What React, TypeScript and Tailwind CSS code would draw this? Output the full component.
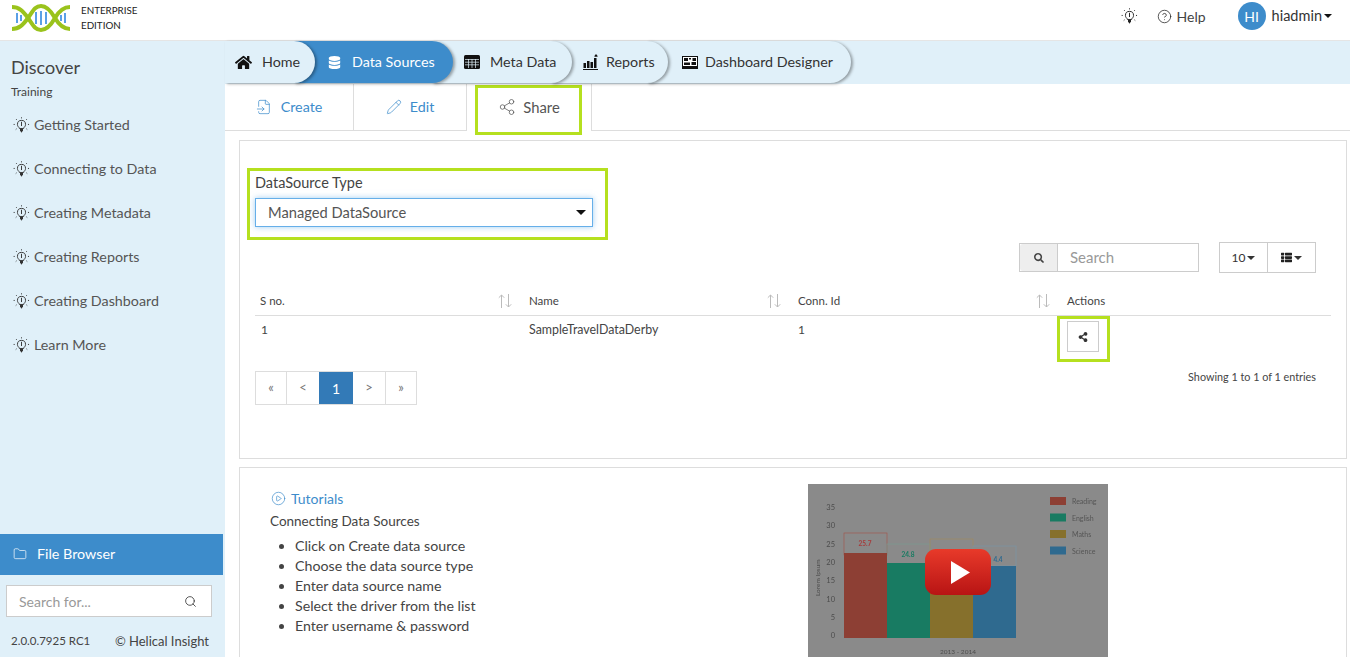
import { Fragment } from 'react';
import { FaHome, FaDatabase, FaShareAlt, FaSearch, FaThList } from 'react-icons/fa';
import { Search, Pencil, Share2, Folder, CirclePlay, CircleHelp, FileInput } from 'lucide-react';

const FONT = "font-['Lato','Noto_Sans',sans-serif]";

const TRAINING = ['Getting Started', 'Connecting to Data', 'Creating Metadata', 'Creating Reports', 'Creating Dashboard', 'Learn More'];
const STEPS = ['Click on Create data source', 'Choose the data source type', 'Enter data source name', 'Select the driver from the list', 'Enter username & password'];

function Bulb({ className }: { className?: string }) {
  return (
    <svg viewBox="0 0 16 16" className={className} fill="none" stroke="currentColor" strokeWidth="0.9">
      <path d="M5.4 9.6C4.5 8.8 4.2 7.900 4.2 7a3.800 3.800 0 0 1 7.600 0c0 .9-.3 1.800-1.200 2.600-.4.4-.6.8-.6 1.200H6c0-.4-.2-.8-.6-1.200Z" />
      <path d="M8 4.500v4M6.800 12h2.400" />
      <path d="M6.600 11.400h2.800v1.400L8 14.800l-1.400-2Z" fill="currentColor" stroke="none" />
      <path d="M8 .3v1.200M2.800 1.900l.9.900M13.200 1.900l-.9.900M.6 7h1.300M14.100 7h1.300M2.600 11.800l.9-.8M13.400 11.800l-.9-.8" strokeDasharray="1 .5" />
    </svg>
  );
}

function Logo() {
  return (
    <svg viewBox="0 0 60 28" className="h-7 w-[60px]">
      <g stroke="#5aa0e6" strokeWidth="2">
        <path d="M6 9v10M10 11v6M25 8v12M30 7v14M35 8v12M50 11v6M54 9v10" />
      </g>
      <g fill="none" stroke="#9ac31c" strokeWidth="4">
        <path d="M1 3C8 3 12 7 17 14S24 26 30 26 40 21 44 14 52 3 59 3" />
        <path d="M1 25C8 25 12 21 17 14S24 2 30 2 40 7 44 14 52 25 59 25" />
      </g>
    </svg>
  );
}

function TableIcon() {
  return (
    <svg viewBox="0 0 16 14" className="h-[14px] w-4">
      <rect x="0" y="0" width="16" height="14" rx="1.500" fill="#111" />
      <path d="M1 4.500h14M1 7.200h14M1 9.800h14M4.500 4v9M8 4v9M11.500 4v9" stroke="#e0f0f9" strokeWidth="0.700" />
    </svg>
  );
}

function ReportsIcon() {
  return (
    <svg viewBox="0 0 16 16" className="h-4 w-4" fill="#111">
      <rect x="0.500" y="9" width="2.500" height="5" />
      <rect x="4" y="7" width="2.500" height="7" />
      <rect x="7.500" y="8" width="2.500" height="6" />
      <rect x="11" y="4" width="2.500" height="10" />
      <path d="M0 15h15v1H0ZM13 0l2 2.500h-1.500V3h-1v-.5H11Z" />
    </svg>
  );
}

function DashIcon() {
  return (
    <svg viewBox="0 0 16 13" className="h-[13px] w-4">
      <rect x="0.500" y="0.500" width="15" height="10" fill="#fff" stroke="#111" />
      <path d="M2 2h4v3H2ZM7 2h2v1.500H7ZM10.500 2H14v3h-3.500ZM2 6.500h6V9H2ZM9.500 6h4.500v3H9.500Z" fill="#111" />
      <rect x="0" y="11" width="16" height="2" fill="#111" />
    </svg>
  );
}

function SortIcon() {
  return (
    <svg viewBox="0 0 16 16" className="h-4 w-4 text-[#bbb]" fill="none" stroke="currentColor" strokeWidth="1">
      <path d="M4.500 15V2M1.800 4.700 4.500 2l2.700 2.700M11.500 1v13M8.800 11.300l2.700 2.700 2.700-2.700" />
    </svg>
  );
}

function Caret({ className = '' }: { className?: string }) {
  return <span className={`inline-block h-0 w-0 border-x-[4px] border-t-[4px] border-x-transparent border-t-current ${className}`} />;
}

function Pill({ label, icon, width, active, z }: { label: string; icon: React.ReactNode; width: string; active?: boolean; z: string }) {
  return (
    <div
      className={`${width} ${z} relative flex h-[42px] shrink-0 items-center rounded-r-[21px] shadow-[2px_1px_3px_rgba(0,0,0,0.35)] ${
        active ? 'bg-[#3d8ccb] text-white' : 'bg-[#e0f0f9] text-[#333]'
      }`}
    >
      {icon}
      <span className="text-[14.300px]">{label}</span>
    </div>
  );
}

function VideoThumb() {
  const ticks = [35, 30, 25, 20, 15, 10, 5, 0];
  const legend = [['Reading', '#8d3f34'], ['English', '#187b62'], ['Maths', '#86702c'], ['Science', '#2f6a8f']];
  return (
    <div className="relative ml-[100px] h-[173px] w-[300px] shrink-0 overflow-hidden bg-[#8a8a8a]">
      <svg viewBox="0 0 300 173" className="h-full w-full blur-[0.6px]">
        {ticks.map((t, i) => (
          <text key={t} x="27" y={26 + i * 18.300} textAnchor="end" fontSize="7.500" fill="#4c4c4c">{t}</text>
        ))}
        <text x="0" y="0" fontSize="6.500" fill="#4c4c4c" transform="translate(12 112) rotate(-90)">Lorem Ipsum</text>
        <rect x="36" y="49" width="43" height="22" fill="none" stroke="#a05a50" strokeWidth="0.700" />
        <rect x="79" y="60" width="43" height="20" fill="none" stroke="#7a9a90" strokeWidth="0.700" />
        <rect x="122" y="55" width="43" height="20" fill="none" stroke="#a08a60" strokeWidth="0.700" />
        <rect x="165" y="62" width="43" height="20" fill="none" stroke="#7a95a5" strokeWidth="0.700" />
        <rect x="36" y="69" width="43" height="85" fill="#8d3f34" />
        <rect x="79" y="79" width="43" height="75" fill="#187b62" />
        <rect x="122" y="75" width="43" height="79" fill="#86702c" />
        <rect x="165" y="82" width="43" height="72" fill="#2f6a8f" />
        <text x="57" y="62" textAnchor="middle" fontSize="6.500" fontWeight="bold" fill="#a63c3c">25.7</text>
        <text x="100" y="73" textAnchor="middle" fontSize="6.500" fontWeight="bold" fill="#187b62">24.8</text>
        <text x="190" y="78" textAnchor="middle" fontSize="6.500" fontWeight="bold" fill="#2f6a8f">4.4</text>
        <text x="150" y="170" textAnchor="middle" fontSize="6.500" fill="#4c4c4c">2013 - 2014</text>
        {legend.map(([name, c], i) => (
          <Fragment key={name}>
            <rect x="242" y={13 + i * 16.500} width="16" height="8" fill={c} />
            <text x="264" y={20 + i * 16.500} fontSize="7" fill="#555">{name}</text>
          </Fragment>
        ))}
        <defs>
          <linearGradient id="yt" x1="0" y1="0" x2="0" y2="1">
            <stop offset="0" stopColor="#e83a2a" />
            <stop offset="1" stopColor="#b81414" />
          </linearGradient>
        </defs>
        <rect x="117" y="65" width="66" height="46" rx="11" fill="url(#yt)" />
        <path d="M143 77v23l19-11.500Z" fill="#fff" />
      </svg>
    </div>
  );
}

export default function App() {
  return (
    <div className={`${FONT} flex h-[657px] w-[1350px] flex-col overflow-hidden bg-white text-[#333]`}>
      {/* top bar */}
      <header className="flex h-[41px] shrink-0 items-start border-b border-[#e5e5e5] bg-white">
        <div className="ml-[11px] mt-[4px]"><Logo /></div>
        <div className="ml-[10px] mt-[3px] text-[9.800px] leading-[15px] text-[#222]">
          <div>ENTERPRISE</div>
          <div>EDITION</div>
        </div>
        <div className="ml-auto mt-[2px] flex items-center">
          <Bulb className="h-[17px] w-[17px] text-[#222]" />
          <CircleHelp className="ml-[19px] h-[15px] w-[15px] text-[#222]" strokeWidth={1.2} />
          <span className="ml-[5px] text-[14px] text-[#444]">Help</span>
          <div className="ml-[32px] flex h-7 w-7 items-center justify-center rounded-full bg-[#3d8ccb] text-[14px] text-white">HI</div>
          <span className="ml-[6px] text-[14.500px] text-[#333]">hiadmin</span>
          <Caret className="ml-[2px] mr-[18px] text-[#111]" />
        </div>
      </header>

      <div className="flex min-h-0 flex-1">
        {/* sidebar */}
        <aside className="flex w-[225px] shrink-0 flex-col bg-[#e0f0f9]">
          <div className="ml-[11px] mt-[14px] text-[18px] leading-[24px] text-[#444]">Discover</div>
          <div className="ml-[11px] mt-[5px] text-[12px] leading-[16px] text-[#444]">Training</div>
          <ul className="mt-[3px]">
            {TRAINING.map(t => (
              <li key={t} className="flex h-[44px] items-center pl-[13px] text-[14.300px] text-[#555]">
                <Bulb className="mr-[4px] h-[17px] w-[17px] text-[#333]" />
                {t}
              </li>
            ))}
          </ul>
          <div className="mr-[2px] mt-auto flex h-[41px] items-center bg-[#3d8ccb] pb-[2px] pl-[13px] text-[14.300px] text-white">
            <Folder className="mr-[10px] h-[14px] w-[14px]" strokeWidth={1.2} />
            File Browser
          </div>
          <div className="ml-[6px] mt-[10px] flex h-8 w-[206px] items-center justify-between border border-[#ccc] bg-white pl-3 pr-[14px] text-[14px] text-[#999]">
            Search for...
            <Search className="h-[13px] w-[13px] text-[#333]" strokeWidth={1.5} />
          </div>
          <div className="mb-[8px] ml-[11px] mr-[16px] mt-[16px] flex items-center justify-between leading-4 text-[#444]">
            <span className="text-[11.500px]">2.0.0.7925 RC1</span>
            <span className="text-[13px]">© Helical Insight</span>
          </div>
        </aside>

        {/* main */}
        <main className="flex min-w-0 flex-1 flex-col">
          <nav className="flex h-[43px] shrink-0 bg-[#e0f0f9]">
            <Pill z="z-50" width="w-[90px]" label="Home" icon={<FaHome className="ml-[10px] mr-[10px] h-[17px] w-[17px] text-[#111]" />} />
            <Pill z="z-40" width="w-[159px] -ml-[21px] pl-[21px]" active label="Data Sources" icon={<FaDatabase className="ml-[13px] mr-[11px] h-[13px] w-[13px]" />} />
            <Pill z="z-30" width="w-[140px] -ml-[21px] pl-[21px]" label="Meta Data" icon={<span className="ml-[11px] mr-[10px]"><TableIcon /></span>} />
            <Pill z="z-20" width="w-[117px] -ml-[21px] pl-[21px]" label="Reports" icon={<span className="ml-[11px] mr-[7px]"><ReportsIcon /></span>} />
            <Pill z="z-10" width="w-[204px] -ml-[21px] pl-[21px]" label="Dashboard Designer" icon={<span className="ml-[14px] mr-[7px]"><DashIcon /></span>} />
          </nav>

          {/* tabs */}
          <div className="flex h-[47px] shrink-0 border-b border-[#ddd]">
            <div className="flex w-[129px] items-center justify-center gap-[9px] border-r border-[#ddd] text-[14.300px] text-[#3d8ccb]">
              <FileInput className="h-4 w-4" strokeWidth={1.1} />
              Create
            </div>
            <div className="flex w-[112px] items-center justify-center gap-[8px] text-[14.300px] text-[#3d8ccb]">
              <Pencil className="h-4 w-4" strokeWidth={1.1} />
              Edit
            </div>
            <div className="relative -mb-px flex w-[126px] items-center justify-center gap-[7px] border-x border-[#ddd] bg-white pb-px text-[14.800px] text-[#555]">
              <Share2 className="h-[18px] w-[18px]" strokeWidth={1} />
              Share
              <div className="absolute bottom-[-4px] left-[8px] right-[9px] top-[1px] border-[3px] border-[#b5e01f]" />
            </div>
          </div>

          <div className="flex min-h-0 flex-1 flex-col gap-[8px] pl-[14px] pr-[3px] pt-[9px]">
            {/* share panel */}
            <section className="relative h-[319px] shrink-0 border border-[#ddd] px-[15px]">
              <div className="relative mt-[33px] text-[14.500px] text-[#444]">
                <label className="block h-[18px] leading-[18px]">DataSource Type</label>
                <div className="mt-[6px] flex h-[29px] w-[338px] items-center justify-between border border-[#66afe9] bg-white pl-3 pr-[6px] text-[14.700px] text-[#555] shadow-[0_0_6px_rgba(102,175,233,0.6)]">
                  Managed DataSource
                  <Caret className="border-x-[5px] border-t-[5px] text-[#111]" />
                </div>
                <div className="absolute -left-[8px] -top-[6px] h-[72px] w-[361px] border-[3px] border-[#b5e01f]" />
              </div>

              <div className="mr-[15px] mt-[16px] flex justify-end">
                <div className="flex h-[29px] w-[180px] border border-[#ccc]">
                  <span className="flex w-[38px] items-center justify-center rounded-l-[3px] border-r border-[#ccc] bg-[#eee]">
                    <FaSearch className="h-[10px] w-[10px] text-[#444]" />
                  </span>
                  <span className="flex items-center pl-3 text-[15px] text-[#999]">Search</span>
                </div>
                <div className="ml-[20px] flex h-[31px] w-[97px] -translate-y-px border border-[#ccc] text-[#333]">
                  <span className="flex w-[48px] items-center justify-center gap-[2px] border-r border-[#ccc] text-[12px]">10<Caret /></span>
                  <span className="flex flex-1 items-center justify-center gap-[2px]"><FaThList className="h-[11px] w-[11px] text-[#222]" /><Caret /></span>
                </div>
              </div>

              <div className="mt-[13px] grid grid-cols-[269px_269px_269px_1fr] text-[11.500px] text-[#444]">
                <div className="flex h-[29px] items-center justify-between border-b border-[#ddd] pl-[5px] pr-[11px]">S no.<SortIcon /></div>
                <div className="flex h-[29px] items-center justify-between border-b border-[#ddd] pl-[5px] pr-[11px]">Name<SortIcon /></div>
                <div className="flex h-[29px] items-center justify-between border-b border-[#ddd] pl-[5px] pr-[11px]">Conn. Id<SortIcon /></div>
                <div className="flex h-[29px] items-center border-b border-[#ddd] pl-[5px]">Actions</div>
                <div className="pl-[6px] pt-[5px] text-[12px]">1</div>
                <div className="pl-[5px] pt-[5px] text-[12.400px]">SampleTravelDataDerby</div>
                <div className="pl-[5px] pt-[5px] text-[12px]">1</div>
                <div className="relative h-[42px] pl-[5px] pt-[5px]">
                  <div className="flex h-[31px] w-[32px] items-center justify-center border border-[#ccc]">
                    <FaShareAlt className="h-[10px] w-[10px] text-[#333]" />
                  </div>
                  <div className="absolute left-[-5px] top-0 h-[46px] w-[53px] border-[3px] border-[#b5e01f]" />
                </div>
              </div>

              <div className="mt-[13px] flex items-start justify-between pr-[15px]">
                <div className="flex h-[34px] border border-[#ddd] text-[13px] text-[#777]">
                  <span className="flex w-[31px] items-center justify-center border-r border-[#ddd]">«</span>
                  <span className="flex w-[32px] items-center justify-center">&lt;</span>
                  <span className="flex w-[34px] items-center justify-center bg-[#337ab7] text-[14px] text-white">1</span>
                  <span className="flex w-[33px] items-center justify-center border-r border-[#ddd]">&gt;</span>
                  <span className="flex w-[30px] items-center justify-center">»</span>
                </div>
                <span className="text-[10.800px] leading-[12px] text-[#444]">Showing 1 to 1 of 1 entries</span>
              </div>
            </section>

            {/* tutorials panel */}
            <section className="flex min-h-0 flex-1 border-x border-t border-[#ddd] pl-[30px] pt-[16px]">
              <div className="w-[438px] shrink-0">
                <div className="mt-[2px] flex h-[24px] items-center text-[14px] text-[#3d8ccb]">
                  <CirclePlay className="ml-px mr-[5px] h-[15px] w-[15px]" strokeWidth={1.1} />
                  Tutorials
                </div>
                <div className="mt-px h-[20px] text-[13.500px] leading-[20px] text-[#444]">Connecting Data Sources</div>
                <ul className="ml-[25px] mt-[5px] list-disc text-[14.200px] leading-[20px] text-[#444]">
                  {STEPS.map(s => <li key={s}>{s}</li>)}
                </ul>
              </div>
              <VideoThumb />
            </section>
          </div>
        </main>
      </div>
    </div>
  );
}
